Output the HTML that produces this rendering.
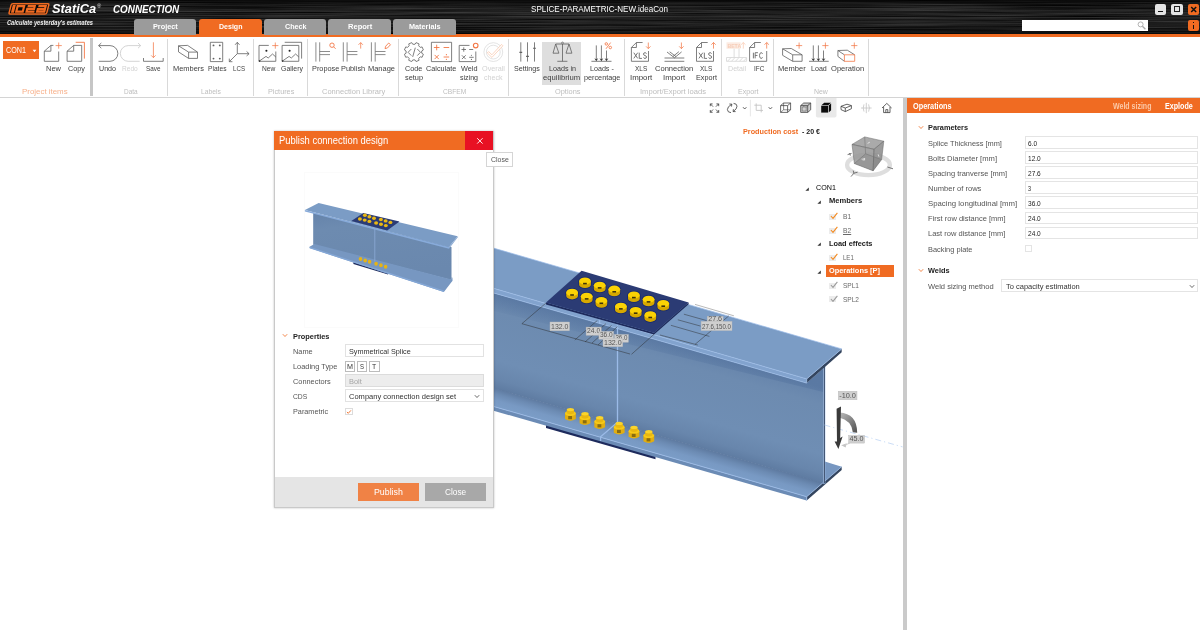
<!DOCTYPE html>
<html><head><meta charset="utf-8"><title>IDEA StatiCa Connection</title>
<style>
html,body{margin:0;padding:0;}
body{width:1200px;height:630px;overflow:hidden;background:#fff;position:relative;font-family:"Liberation Sans",sans-serif;}
#root{position:absolute;left:0;top:0;width:1200px;height:630px;overflow:hidden;will-change:transform;}
.r{position:absolute;display:block;}
.t{position:absolute;display:block;white-space:nowrap;transform-origin:0 50%;font-family:"Liberation Sans",sans-serif;}
#hdr{background:
 repeating-linear-gradient(180deg,rgba(255,255,255,0.00) 0px,rgba(255,255,255,0.035) 0.7px,rgba(255,255,255,0.0) 1.5px,rgba(255,255,255,0.05) 2.3px,rgba(255,255,255,0.01) 3.1px,rgba(255,255,255,0.03) 3.7px,rgba(255,255,255,0.0) 4.3px),
 linear-gradient(180deg,#0c0c0c 0%,#131313 12%,#191919 30%,#1f1f1f 42%,#101010 55%,#0b0b0b 66%,#161616 80%,#101010 92%,#090909 100%);}
</style></head>
<body><div id="root">
<!-- part_header -->
<div class="r" id="hdr" style="left:0;top:0;width:1200px;height:33.8px;"></div>
<svg class="r" style="left:0;top:0" width="1200" height="34" viewBox="0 0 1200 34"><defs><filter id="brush" color-interpolation-filters="sRGB" x="0" y="0" width="100%" height="100%"><feTurbulence type="fractalNoise" baseFrequency="0.006 0.8" numOctaves="3" seed="7" result="n"/><feColorMatrix in="n" type="matrix" values="0.36 0 0 0 -0.05  0.36 0 0 0 -0.05  0.36 0 0 0 -0.05  0 0 0 0 1"/></filter><linearGradient id="hv" x1="0" y1="0" x2="0" y2="1"><stop offset="0" stop-color="#000" stop-opacity="0.75"/><stop offset="0.12" stop-color="#000" stop-opacity="0.25"/><stop offset="0.35" stop-color="#000" stop-opacity="0"/><stop offset="0.7" stop-color="#000" stop-opacity="0.1"/><stop offset="0.9" stop-color="#000" stop-opacity="0.35"/><stop offset="1" stop-color="#000" stop-opacity="0.6"/></linearGradient></defs><rect width="1200" height="34" filter="url(#brush)"/><rect width="1200" height="34" fill="url(#hv)"/></svg>
<div class="r" style="left:0.0px;top:33.6px;width:1200.0px;height:3.7px;background:#f06b22;"></div>
<svg class="r" style="left:7.3px;top:2.9px;" width="43.5" height="12.0" viewBox="-3 0 43.5 12"><g transform="skewX(-14.7)">
      <rect x="1.65" y="0.75" width="37.7" height="10.3" rx="1.3" fill="#0a0a0a" stroke="#f06b22" stroke-width="1.5"/>
      <g fill="none" stroke="#f06b22" stroke-width="2.2">
      <path d="M4.9 2.1 V9.7" stroke-width="3"/>
      <path d="M8.5 3.2 H15 V8.6 H8.5 Z"/>
      <path d="M18.5 3.2 H25.6 V5.9 H18.8 V8.6 H26.7"/>
      <path d="M29.2 3.2 H36.55 V8.6 H29.4 V6.1 H36.55"/>
      </g>
    </g></svg>
<span class="t" style="left:52.0px;top:1.0px;font-size:12.6px;line-height:16.4px;color:#fff;transform:scaleX(1.020);font-weight:bold;font-style:italic;">StatiCa</span>
<span class="t" style="left:97.3px;top:2.8px;font-size:5px;line-height:6.5px;color:#ddd;transform:scaleX(1.140);">®</span>
<span class="t" style="left:112.7px;top:2.6px;font-size:10.6px;line-height:13.8px;color:#fff;transform:scaleX(0.930);font-weight:bold;font-style:italic;">CONNECTION</span>
<span class="t" style="left:7.0px;top:19.4px;font-size:6.8px;line-height:8.8px;color:#f0f0f0;transform:scaleX(0.839);font-weight:bold;font-style:italic;">Calculate yesterday's estimates</span>
<span class="t" style="left:531.0px;top:3.7px;font-size:8.6px;line-height:11.2px;color:#fff;transform:scaleX(0.938);">SPLICE-PARAMETRIC-NEW.ideaCon</span>
<div class="r" style="left:133.5px;top:19.1px;width:62.0px;height:15.5px;background:#9b9b9b;border-radius:3px 3px 0 0;"></div>
<span class="t" style="left:152.6px;top:21.8px;font-size:8.1px;line-height:10.5px;color:#fff;transform:scaleX(0.903);font-weight:bold;">Project</span>
<div class="r" style="left:199.0px;top:19.1px;width:63.0px;height:15.5px;background:#f06b22;border-radius:3px 3px 0 0;"></div>
<span class="t" style="left:219.2px;top:21.8px;font-size:8.1px;line-height:10.5px;color:#fff;transform:scaleX(0.870);font-weight:bold;">Design</span>
<div class="r" style="left:264.0px;top:19.1px;width:62.2px;height:15.5px;background:#9b9b9b;border-radius:3px 3px 0 0;"></div>
<span class="t" style="left:284.8px;top:21.8px;font-size:8.1px;line-height:10.5px;color:#fff;transform:scaleX(0.888);font-weight:bold;">Check</span>
<div class="r" style="left:328.3px;top:19.1px;width:62.7px;height:15.5px;background:#9b9b9b;border-radius:3px 3px 0 0;"></div>
<span class="t" style="left:348.0px;top:21.8px;font-size:8.1px;line-height:10.5px;color:#fff;transform:scaleX(0.931);font-weight:bold;">Report</span>
<div class="r" style="left:393.2px;top:19.1px;width:62.8px;height:15.5px;background:#9b9b9b;border-radius:3px 3px 0 0;"></div>
<span class="t" style="left:409.3px;top:21.8px;font-size:8.1px;line-height:10.5px;color:#fff;transform:scaleX(0.900);font-weight:bold;">Materials</span>
<div class="r" style="left:1021.7px;top:19.5px;width:126.3px;height:11.2px;background:#fff;"></div>
<svg class="r" style="left:1137.0px;top:21.0px;" width="10.0" height="9.0" viewBox="0 0 10.00 9.00"><circle cx="3.6" cy="3.4" r="2.5" fill="none" stroke="#aaa" stroke-width="0.9"/><path d="M5.4 5.2 L8.4 8.2" stroke="#aaa" stroke-width="1.3"/></svg>
<div class="r" style="left:1154.5px;top:3.7px;width:11.2px;height:11.0px;background:#e4e4e4;border-radius:2px;"></div>
<div class="r" style="left:1158.0px;top:10.6px;width:4.6px;height:1.2px;background:#111;"></div>
<div class="r" style="left:1171.0px;top:3.7px;width:11.6px;height:11.0px;background:#e4e4e4;border-radius:2px;"></div>
<div class="r" style="left:1174.0px;top:6.2px;width:5.8px;height:5.8px;border:0.8px solid #222;box-sizing:border-box;border-top-width:1.6px;"></div>
<div class="r" style="left:1188.0px;top:3.7px;width:11.2px;height:11.0px;background:#f06b22;border-radius:2px;"></div>
<svg class="r" style="left:1188.0px;top:3.7px;" width="11.2" height="11.0" viewBox="0 0 11.20 11.00"><path d="M3.2 3 L8.2 8 M8.2 3 L3.2 8" stroke="#111" stroke-width="1.5"/></svg>
<div class="r" style="left:1188.0px;top:19.5px;width:11.2px;height:11.2px;background:#f06b22;border-radius:2px;"></div>
<div class="r" style="left:1193.1px;top:22.2px;width:1.3px;height:1.3px;background:#111;"></div>
<div class="r" style="left:1193.1px;top:24.6px;width:1.3px;height:4.0px;background:#111;"></div>
<!-- part_ribbon -->
<div class="r" style="left:0.0px;top:37.3px;width:1200.0px;height:60.3px;background:#fff;"></div>
<div class="r" style="left:0.0px;top:96.6px;width:1200.0px;height:1.2px;background:#d4d4d4;"></div>
<div class="r" style="left:542.1px;top:41.6px;width:39.1px;height:43.6px;background:#dedede;"></div>
<div class="r" style="left:3.0px;top:41.1px;width:36.2px;height:18.2px;background:#f06b22;"></div>
<span class="t" style="left:6.4px;top:45.1px;font-size:8.3px;line-height:10.8px;color:#fff;transform:scaleX(0.867);">CON1</span>
<svg class="r" style="left:32.0px;top:48.8px;" width="5.0" height="4.0" viewBox="0 0 5.00 4.00"><path d="M0.6 0.8 L4.4 0.8 L2.5 3.2 Z" fill="#fff"/></svg>
<div class="r" style="left:90.4px;top:38.0px;width:2.5px;height:58.4px;background:#c6c6c6;"></div>
<div class="r" style="left:166.5px;top:39.0px;width:1.0px;height:56.5px;background:#d9d9d9;"></div>
<div class="r" style="left:253.0px;top:39.0px;width:1.0px;height:56.5px;background:#d9d9d9;"></div>
<div class="r" style="left:306.8px;top:39.0px;width:1.0px;height:56.5px;background:#d9d9d9;"></div>
<div class="r" style="left:397.9px;top:39.0px;width:1.0px;height:56.5px;background:#d9d9d9;"></div>
<div class="r" style="left:508.1px;top:39.0px;width:1.0px;height:56.5px;background:#d9d9d9;"></div>
<div class="r" style="left:624.1px;top:39.0px;width:1.0px;height:56.5px;background:#d9d9d9;"></div>
<div class="r" style="left:720.6px;top:39.0px;width:1.0px;height:56.5px;background:#d9d9d9;"></div>
<div class="r" style="left:773.1px;top:39.0px;width:1.0px;height:56.5px;background:#d9d9d9;"></div>
<div class="r" style="left:867.7px;top:39.0px;width:1.0px;height:56.5px;background:#d9d9d9;"></div>
<svg class="r" style="left:0;top:0" width="1200" height="100" viewBox="0 0 1200 100"><path d="M50.9 45.4 H53.4 M58.7 51.5 V61.3 H44.3 V51.2 L50.9 45.4 V51.2 H44.3" stroke="#606060" stroke-width="0.8" fill="none" /><path d="M55.6 45.6 H61.800000000000004 M58.7 42.5 V48.7" stroke="#f37746" stroke-width="0.75" fill="none" /><path d="M73.7 45.4 H81.7 V61.3 H67.1 V51.2 L73.7 45.4 V51.2 H67.1" stroke="#606060" stroke-width="0.8" fill="none" /><path d="M75.7 42.3 H84.4 V58.6" stroke="#f37746" stroke-width="0.9" fill="none" /><path d="M98.5 61.3 H110 A7.85 7.85 0 0 0 110 45.6 H98.7 M101.3 43 L98.6 45.6 L101.3 48.2" stroke="#606060" stroke-width="0.8" fill="none" /><path d="M139.7 61.3 H128.2 A7.85 7.85 0 0 1 128.2 45.6 H140.6 M138 43 L140.7 45.6 L138 48.2" stroke="#c9c9c9" stroke-width="0.8" fill="none" /><path d="M153.4 42.3 V57.6 M151.20000000000002 55.4 L153.4 57.6 L155.6 55.4" stroke="#f37746" stroke-width="0.75" fill="none" /><path d="M143.5 58 V61.3 H163.2 V58" stroke="#606060" stroke-width="0.8" fill="none" /><path d="M188.6 52.1 H197.5 V58.4 H188.6 Z M178.5 45.8 L188.6 52.1 M178.5 45.8 L187.6 45.4 L197.5 52.1 M178.5 45.8 V51.9 L188.6 58.4" stroke="#606060" stroke-width="0.8" fill="none" /><path d="M210.3 42.3 H222.7 V61.6 H210.3 Z" stroke="#606060" stroke-width="0.8" fill="none" /><circle cx="213.5" cy="45.4" r="0.95" fill="#606060"/><circle cx="219.8" cy="45.4" r="0.95" fill="#606060"/><circle cx="213.5" cy="58.6" r="0.95" fill="#606060"/><circle cx="219.8" cy="58.6" r="0.95" fill="#606060"/><path d="M237.3 53.7 V42.4 M235.1 44.8 L237.3 42.3 L239.5 44.8 M237.3 53.7 H249 M246.6 51.5 L249.1 53.7 L246.6 55.9 M237.3 53.7 L229.3 61.7 M229.3 58.6 V61.7 H232.4" stroke="#606060" stroke-width="0.8" fill="none" /><path d="M268.8 45.4 H259 V61.3 H275.8 V51.5 M259.4 61 L266 56.4 L268.2 58 L272.5 54 L275.8 57" stroke="#606060" stroke-width="0.8" fill="none" /><circle cx="266.4" cy="50.7" r="1.05" fill="#222"/><circle cx="259.5" cy="61" r="0.8" fill="#222"/><path d="M272.2 45.6 H278.40000000000003 M275.3 42.5 V48.7" stroke="#f37746" stroke-width="0.75" fill="none" /><path d="M282.1 45.4 H298.8 V61.3 H282.1 Z M282.5 61 L289.1 56.4 L291.3 58 L295.6 54 L298.8 57 M284.7 42.3 H301.6 V58.6" stroke="#606060" stroke-width="0.8" fill="none" /><circle cx="289.6" cy="50.7" r="1.05" fill="#222"/><circle cx="282.6" cy="61" r="0.8" fill="#222"/><path d="M315.9 42.3 V61.6 M319.7 42.3 V61.6 M319.7 51.5 H330.0 M319.7 54.6 H330.0" stroke="#707070" stroke-width="0.8" fill="none" /><path d="M343.3 42.3 V61.6 M347.1 42.3 V61.6 M347.1 51.5 H357.40000000000003 M347.1 54.6 H357.40000000000003" stroke="#707070" stroke-width="0.8" fill="none" /><path d="M371.4 42.3 V61.6 M375.2 42.3 V61.6 M375.2 51.5 H385.5 M375.2 54.6 H385.5" stroke="#707070" stroke-width="0.8" fill="none" /><circle cx="332" cy="45.2" r="2.2" fill="none" stroke="#f37746" stroke-width="0.9"/><path d="M333.6 46.8 L335.6 48.8" stroke="#f37746" stroke-width="0.9" fill="none" /><path d="M360.7 48.6 V42.6 M358.5 44.800000000000004 L360.7 42.6 L362.9 44.800000000000004" stroke="#f37746" stroke-width="0.75" fill="none" /><path d="M385 48.6 L385.7 46.2 L388.7 43 L390.5 44.7 L387.4 48 Z" stroke="#f37746" stroke-width="0.85" fill="none" /><path d="M415.02 44.28 L416.04 42.64 L419.07 43.90 L418.63 45.78 L420.22 47.37 L422.10 46.93 L423.36 49.96 L421.72 50.98 L421.72 53.22 L423.36 54.24 L422.10 57.27 L420.22 56.83 L418.63 58.42 L419.07 60.30 L416.04 61.56 L415.02 59.92 L412.78 59.92 L411.76 61.56 L408.73 60.30 L409.17 58.42 L407.58 56.83 L405.70 57.27 L404.44 54.24 L406.08 53.22 L406.08 50.98 L404.44 49.96 L405.70 46.93 L407.58 47.37 L409.17 45.78 L408.73 43.90 L411.76 42.64 L412.78 44.28 Z" stroke="#606060" stroke-width="0.8" fill="none" stroke-linejoin="round"/><path d="M411.3 49 L408.1 52.3 L411.3 55.6 M417.3 49 L420.5 52.3 L417.3 55.6 M415.3 47.7 L412.7 56.9" stroke="#606060" stroke-width="0.8" fill="none" /><path d="M431.4 42.3 H451.6 V61.6 H431.4 Z" stroke="#606060" stroke-width="0.8" fill="none" /><path d="M433.9 47.5 H439.5 M436.7 44.7 V50.3 M443.6 47.5 H449.2 M434.6 54.9 L438.8 59.1 M438.8 54.9 L434.6 59.1 M443.6 57 H449.2" stroke="#f37746" stroke-width="0.9" fill="none" /><circle cx="446.4" cy="54.7" r="0.6" fill="#f37746"/><circle cx="446.4" cy="59.3" r="0.6" fill="#f37746"/><path d="M469.5 45.4 H459.2 V61.6 H475.8 V51.5" stroke="#606060" stroke-width="0.8" fill="none" /><path d="M461.5 49.5 H466 M463.75 47.3 V51.7 M469.2 49.5 H473.2 M461.9 55.3 L465.7 59.1 M465.7 55.3 L461.9 59.1 M469.2 57.3 H473.7" stroke="#606060" stroke-width="0.8" fill="none" /><circle cx="471.4" cy="55.2" r="0.55" fill="#606060"/><circle cx="471.4" cy="59.4" r="0.55" fill="#606060"/><circle cx="475.7" cy="45.6" r="2.3" fill="none" stroke="#f37746" stroke-width="1.1"/><circle cx="493.3" cy="52.1" r="9.4" fill="none" stroke="#dcdcdc" stroke-width="0.8"/><circle cx="493.3" cy="52.1" r="6.9" fill="none" stroke="#dcdcdc" stroke-width="0.8"/><path d="M488.6 51.6 L491.9 54.8 L501.6 44.4 L502.9 45.8 L491.9 57.4 L487.3 52.9 Z" stroke="#f9c4a8" stroke-width="0.7" fill="#fff" /><path d="M520.8 42.3 V61.6 M527.5 42.3 V61.6 M534.5 42.3 V61.6" stroke="#606060" stroke-width="0.8" fill="none" /><path d="M519.4 52.4 H522.2 M526.1 56.4 H528.9 M533.1 48.3 H535.9" stroke="#606060" stroke-width="1.1" fill="none" /><path d="M562.5 44 V61.3 M557.3 61.3 H567.4 M555.7 44 H569 M555.7 44 L553 53.2 H558.9 Z M569 44 L566 53.2 H571.9 Z" stroke="#606060" stroke-width="0.8" fill="none" /><circle cx="562.5" cy="43" r="0.95" fill="#dedede" stroke="#606060" stroke-width="0.7"/><path d="M596.3 45.4 V60" stroke="#606060" stroke-width="0.8" fill="none" /><path d="M594.4 58.2 L596.3 61.2 L598.1999999999999 58.2 L596.3 59.2 Z" fill="#333"/><path d="M601.4 45.4 V60" stroke="#606060" stroke-width="0.8" fill="none" /><path d="M599.5 58.2 L601.4 61.2 L603.3 58.2 L601.4 59.2 Z" fill="#333"/><path d="M606.5 50.5 V60" stroke="#606060" stroke-width="0.8" fill="none" /><path d="M604.6 58.2 L606.5 61.2 L608.4 58.2 L606.5 59.2 Z" fill="#333"/><path d="M591.4 61.3 H611.5" stroke="#606060" stroke-width="0.8" fill="none" /><circle cx="606.3" cy="43.9" r="1.25" fill="none" stroke="#f37746" stroke-width="0.85"/><circle cx="610.3" cy="47.5" r="1.25" fill="none" stroke="#f37746" stroke-width="0.85"/><path d="M610.6 42.6 L606 48.8" stroke="#f37746" stroke-width="0.85" fill="none" /><path d="M636.4 42.5 H642.6 M648.5 51 V61.3 H631.4 V47.5 L636.4 42.5 V47.5 H631.4" stroke="#606060" stroke-width="0.8" fill="none" /><path d="M633.80 52.7 L637.70 58.4 M637.70 52.7 L633.80 58.4 M639.25 52.7 V58.4 H641.95 M646.50 53.60 Q646.10 52.7 645.00 52.7 Q643.50 52.7 643.50 54.12 Q643.50 55.27 645.00 55.55 Q646.50 55.89 646.50 57.03 Q646.50 58.4 645.00 58.4 Q643.80 58.4 643.50 57.50" stroke="#606060" stroke-width="0.85" fill="none" /><path d="M648.3 42.5 V48.6 M646.0999999999999 46.4 L648.3 48.6 L650.5 46.4" stroke="#f37746" stroke-width="0.75" fill="none" /><path d="M664.5 58 H684.3 M664.5 61.3 H684.3 M667 52 L674.5 57.8 L681.6 51.9 M669.7 51.8 L676 56.6 M672.9 56.5 L678.9 51.7" stroke="#606060" stroke-width="0.8" fill="none" /><path d="M681.4 42.5 V48.6 M679.1999999999999 46.4 L681.4 48.6 L683.6 46.4" stroke="#f37746" stroke-width="0.75" fill="none" /><path d="M701.5 42.5 H707.7 M713.5 51 V61.3 H696.5 V47.5 L701.5 42.5 V47.5 H696.5" stroke="#606060" stroke-width="0.8" fill="none" /><path d="M698.90 52.7 L702.80 58.4 M702.80 52.7 L698.90 58.4 M704.35 52.7 V58.4 H707.05 M711.60 53.60 Q711.20 52.7 710.10 52.7 Q708.60 52.7 708.60 54.12 Q708.60 55.27 710.10 55.55 Q711.60 55.89 711.60 57.03 Q711.60 58.4 710.10 58.4 Q708.90 58.4 708.60 57.50" stroke="#606060" stroke-width="0.85" fill="none" /><path d="M713.5 48.6 V42.5 M711.3 44.7 L713.5 42.5 L715.7 44.7" stroke="#f37746" stroke-width="0.75" fill="none" /><rect x="726.5" y="42.3" width="14.1" height="6.5" fill="#fcebe2"/><text x="727.4" y="47.7" font-family="Liberation Sans" font-size="5.2" font-weight="bold" fill="#f6cdb8">BETA</text><path d="M743.3 48.6 V42.5 M741.0999999999999 44.7 L743.3 42.5 L745.5 44.7" stroke="#f9c9b0" stroke-width="0.75" fill="none" /><path d="M734.1 48.8 V57.5 M739 48.8 V57.5 M726.5 57.5 H746.6 V61.3 H726.5 Z M727.5 61.3 L731 57.5 M731.5 61.3 L735 57.5 M735.5 61.3 L739 57.5 M739.5 61.3 L743 57.5 M743.5 61.3 L746.5 58" stroke="#d6d6d6" stroke-width="0.8" fill="none" /><path d="M754.6 42.5 H760.8000000000001 M766.7 51 V61.3 H749.6 V47.5 L754.6 42.5 V47.5 H749.6" stroke="#606060" stroke-width="0.8" fill="none" /><path d="M753.40 52.7 V58.4 M757.95 52.7 H755.15 V58.4 M755.15 55.44 H757.45 M762.50 53.80 Q762.20 52.7 761.20 52.7 Q759.50 52.7 759.50 55.55 Q759.50 58.4 761.20 58.4 Q762.20 58.4 762.50 57.30" stroke="#606060" stroke-width="0.85" fill="none" /><path d="M766.7 48.6 V42.5 M764.5 44.7 L766.7 42.5 L768.9000000000001 44.7" stroke="#f37746" stroke-width="0.75" fill="none" /><path d="M792.7 54.8 H802.1 V61.3 H792.7 Z M782.6 48.8 L792.7 54.8 M782.6 48.8 L791.3 48.5 L802.1 54.8 M782.6 48.8 V55.3 L792.7 61.3" stroke="#606060" stroke-width="0.8" fill="none" /><path d="M796.0 45.6 H802.2 M799.1 42.5 V48.7" stroke="#f37746" stroke-width="0.75" fill="none" /><path d="M813.3 45.4 V60" stroke="#606060" stroke-width="0.8" fill="none" /><path d="M811.4 58.2 L813.3 61.2 L815.1999999999999 58.2 L813.3 59.2 Z" fill="#333"/><path d="M818.4 45.4 V60" stroke="#606060" stroke-width="0.8" fill="none" /><path d="M816.5 58.2 L818.4 61.2 L820.3 58.2 L818.4 59.2 Z" fill="#333"/><path d="M823.5 50.5 V60" stroke="#606060" stroke-width="0.8" fill="none" /><path d="M821.6 58.2 L823.5 61.2 L825.4 58.2 L823.5 59.2 Z" fill="#333"/><path d="M809 61.3 H828.7" stroke="#606060" stroke-width="0.8" fill="none" /><path d="M822.3 45.6 H828.5 M825.4 42.5 V48.7" stroke="#f37746" stroke-width="0.75" fill="none" /><path d="M837.9 50.5 L844.4 54.8 M837.9 50.5 L847.3 50.2 L854.7 54.8 M837.9 50.5 V56.4 L844.4 61.3" stroke="#606060" stroke-width="0.8" fill="none" /><path d="M844.4 54.8 H854.7 V61.3 H844.4 Z" stroke="#f37746" stroke-width="0.8" fill="none" /><path d="M851.1999999999999 45.6 H857.4 M854.3 42.5 V48.7" stroke="#f37746" stroke-width="0.75" fill="none" /></svg>
<span class="t" style="left:46.0px;top:63.5px;font-size:7.6px;line-height:9.9px;color:#3d3d3d;transform:scaleX(0.987);">New</span>
<span class="t" style="left:67.5px;top:63.5px;font-size:7.6px;line-height:9.9px;color:#3d3d3d;transform:scaleX(0.958);">Copy</span>
<span class="t" style="left:99.0px;top:63.5px;font-size:7.6px;line-height:9.9px;color:#3d3d3d;transform:scaleX(0.936);">Undo</span>
<span class="t" style="left:146.0px;top:63.5px;font-size:7.6px;line-height:9.9px;color:#3d3d3d;transform:scaleX(0.837);">Save</span>
<span class="t" style="left:173.0px;top:63.5px;font-size:7.6px;line-height:9.9px;color:#3d3d3d;transform:scaleX(0.979);">Members</span>
<span class="t" style="left:207.5px;top:63.5px;font-size:7.6px;line-height:9.9px;color:#3d3d3d;transform:scaleX(0.876);">Plates</span>
<span class="t" style="left:233.0px;top:63.5px;font-size:7.6px;line-height:9.9px;color:#3d3d3d;transform:scaleX(0.812);">LCS</span>
<span class="t" style="left:262.0px;top:63.5px;font-size:7.6px;line-height:9.9px;color:#3d3d3d;transform:scaleX(0.875);">New</span>
<span class="t" style="left:281.0px;top:63.5px;font-size:7.6px;line-height:9.9px;color:#3d3d3d;transform:scaleX(0.914);">Gallery</span>
<span class="t" style="left:312.0px;top:63.5px;font-size:7.6px;line-height:9.9px;color:#3d3d3d;transform:scaleX(0.964);">Propose</span>
<span class="t" style="left:341.3px;top:63.5px;font-size:7.6px;line-height:9.9px;color:#3d3d3d;transform:scaleX(0.971);">Publish</span>
<span class="t" style="left:367.5px;top:63.5px;font-size:7.6px;line-height:9.9px;color:#3d3d3d;transform:scaleX(0.983);">Manage</span>
<span class="t" style="left:405.3px;top:63.5px;font-size:7.6px;line-height:9.9px;color:#3d3d3d;transform:scaleX(0.947);">Code</span>
<span class="t" style="left:405.0px;top:73.0px;font-size:7.6px;line-height:9.9px;color:#3d3d3d;transform:scaleX(0.968);">setup</span>
<span class="t" style="left:426.0px;top:63.5px;font-size:7.6px;line-height:9.9px;color:#3d3d3d;transform:scaleX(0.956);">Calculate</span>
<span class="t" style="left:460.5px;top:63.5px;font-size:7.6px;line-height:9.9px;color:#3d3d3d;transform:scaleX(0.961);">Weld</span>
<span class="t" style="left:460.0px;top:73.0px;font-size:7.6px;line-height:9.9px;color:#3d3d3d;transform:scaleX(0.926);">sizing</span>
<span class="t" style="left:513.9px;top:63.5px;font-size:7.6px;line-height:9.9px;color:#3d3d3d;transform:scaleX(0.940);">Settings</span>
<span class="t" style="left:548.6px;top:63.5px;font-size:7.6px;line-height:9.9px;color:#3d3d3d;transform:scaleX(0.943);">Loads in</span>
<span class="t" style="left:542.9px;top:73.0px;font-size:7.6px;line-height:9.9px;color:#3d3d3d;transform:scaleX(1.010);">equilibrium</span>
<span class="t" style="left:589.8px;top:63.5px;font-size:7.6px;line-height:9.9px;color:#3d3d3d;transform:scaleX(0.939);">Loads -</span>
<span class="t" style="left:583.8px;top:73.0px;font-size:7.6px;line-height:9.9px;color:#3d3d3d;transform:scaleX(0.955);">percentage</span>
<span class="t" style="left:634.8px;top:63.5px;font-size:7.6px;line-height:9.9px;color:#3d3d3d;transform:scaleX(0.849);">XLS</span>
<span class="t" style="left:630.0px;top:73.0px;font-size:7.6px;line-height:9.9px;color:#3d3d3d;transform:scaleX(1.035);">Import</span>
<span class="t" style="left:654.7px;top:63.5px;font-size:7.6px;line-height:9.9px;color:#3d3d3d;transform:scaleX(0.996);">Connection</span>
<span class="t" style="left:663.0px;top:73.0px;font-size:7.6px;line-height:9.9px;color:#3d3d3d;transform:scaleX(1.035);">Import</span>
<span class="t" style="left:700.0px;top:63.5px;font-size:7.6px;line-height:9.9px;color:#3d3d3d;transform:scaleX(0.849);">XLS</span>
<span class="t" style="left:695.8px;top:73.0px;font-size:7.6px;line-height:9.9px;color:#3d3d3d;transform:scaleX(0.956);">Export</span>
<span class="t" style="left:753.5px;top:63.5px;font-size:7.6px;line-height:9.9px;color:#3d3d3d;transform:scaleX(0.841);">IFC</span>
<span class="t" style="left:778.3px;top:63.5px;font-size:7.6px;line-height:9.9px;color:#3d3d3d;transform:scaleX(0.994);">Member</span>
<span class="t" style="left:811.0px;top:63.5px;font-size:7.6px;line-height:9.9px;color:#3d3d3d;transform:scaleX(0.935);">Load</span>
<span class="t" style="left:830.8px;top:63.5px;font-size:7.6px;line-height:9.9px;color:#3d3d3d;transform:scaleX(0.995);">Operation</span>
<span class="t" style="left:122.3px;top:63.5px;font-size:7.6px;line-height:9.9px;color:#d2d2d2;transform:scaleX(0.864);">Redo</span>
<span class="t" style="left:482.0px;top:63.5px;font-size:7.6px;line-height:9.9px;color:#d2d2d2;transform:scaleX(0.955);">Overall</span>
<span class="t" style="left:483.8px;top:73.0px;font-size:7.6px;line-height:9.9px;color:#d2d2d2;transform:scaleX(0.932);">check</span>
<span class="t" style="left:727.5px;top:63.5px;font-size:7.6px;line-height:9.9px;color:#d2d2d2;transform:scaleX(0.937);">Detail</span>
<span class="t" style="left:22.0px;top:87.2px;font-size:7.6px;line-height:9.9px;color:#f7b08a;transform:scaleX(1.040);">Project items</span>
<span class="t" style="left:124.0px;top:87.2px;font-size:7.6px;line-height:9.9px;color:#bdbdbd;transform:scaleX(0.853);">Data</span>
<span class="t" style="left:201.0px;top:87.2px;font-size:7.6px;line-height:9.9px;color:#bdbdbd;transform:scaleX(0.893);">Labels</span>
<span class="t" style="left:267.7px;top:87.2px;font-size:7.6px;line-height:9.9px;color:#bdbdbd;transform:scaleX(0.958);">Pictures</span>
<span class="t" style="left:321.8px;top:87.2px;font-size:7.6px;line-height:9.9px;color:#bdbdbd;transform:scaleX(0.991);">Connection Library</span>
<span class="t" style="left:443.0px;top:87.2px;font-size:7.6px;line-height:9.9px;color:#bdbdbd;transform:scaleX(0.876);">CBFEM</span>
<span class="t" style="left:555.1px;top:87.2px;font-size:7.6px;line-height:9.9px;color:#bdbdbd;transform:scaleX(0.974);">Options</span>
<span class="t" style="left:640.0px;top:87.2px;font-size:7.6px;line-height:9.9px;color:#bdbdbd;transform:scaleX(1.002);">Import/Export loads</span>
<span class="t" style="left:737.7px;top:87.2px;font-size:7.6px;line-height:9.9px;color:#bdbdbd;transform:scaleX(0.933);">Export</span>
<span class="t" style="left:814.3px;top:87.2px;font-size:7.6px;line-height:9.9px;color:#bdbdbd;transform:scaleX(0.914);">New</span>
<!-- part_scene -->
<svg class="r" style="left:0;top:98px" width="904" height="532" viewBox="0 98 904 532"><defs><linearGradient id="webg" gradientUnits="userSpaceOnUse" x1="600" y1="323.6" x2="574.7" y2="411.2"><stop offset="0" stop-color="#6684ab"/><stop offset="0.18" stop-color="#6d8bb0"/><stop offset="0.7" stop-color="#6f8eb4"/><stop offset="0.9" stop-color="#6886ac"/><stop offset="1" stop-color="#5f7ca2"/></linearGradient><linearGradient id="botg" gradientUnits="userSpaceOnUse" x1="600" y1="418.5" x2="595" y2="435.7"><stop offset="0" stop-color="#5e7aa0"/><stop offset="0.3" stop-color="#6c8bb3"/><stop offset="0.65" stop-color="#7899c3"/><stop offset="1" stop-color="#7b9dc7"/></linearGradient></defs><polygon points="546.0,424.5 655.5,456.0 655.5,459.3 546.0,428.0" fill="#1d2a5c"/><polygon points="824.0,461.3 841.7,466.7 824.0,482.3" fill="#7797c1"/><polygon points="400.0,266.0 806.7,383.1 823.1,368.6 823.1,483.4 400.0,361.5" fill="url(#webg)"/><defs><linearGradient id="shg" gradientUnits="userSpaceOnUse" x1="600" y1="323.6" x2="594.2" y2="343.8"><stop offset="0" stop-color="#4a6a98" stop-opacity="0.42"/><stop offset="1" stop-color="#4a6a98" stop-opacity="0"/></linearGradient></defs><polygon points="400.0,266.0 806.7,383.1 823.1,368.6 823.1,392.0 400.0,288.0" fill="url(#shg)"/><polygon points="400.0,360.9 823.1,482.8 806.7,496.7 400.0,379.5" fill="url(#botg)"/><polygon points="400.0,379.5 806.7,496.7 806.7,500.6 400.0,383.8" fill="#6b8bb5"/><path d="M400.0 379.5 L806.7 496.7" stroke="#9cbbe6" stroke-width="0.9"/><polygon points="806.7,496.7 841.7,466.7 841.7,470.0 806.7,500.6" fill="#34455f"/><path d="M806.7 496.7 L841.7 466.7" stroke="#9cbbe6" stroke-width="0.8"/><path d="M806.7 496.5 V500.6" stroke="#9cbbe6" stroke-width="0.9"/><rect x="823.1" y="366.5" width="2.2" height="117.3" fill="#9fc0ea"/><rect x="823.8" y="367" width="0.9" height="116.3" fill="#1f2c44"/><polygon points="400.0,221.0 841.7,348.9 806.7,378.9 400.0,261.3" fill="#7b9cc5"/><path d="M400.0 221.0 L841.7 348.9" stroke="#9dbdea" stroke-width="0.7"/><polygon points="400.0,261.3 806.7,378.9 806.7,383.1 400.0,266.0" fill="#82a3ce"/><path d="M400.0 261.3 L806.7 378.9 M400.0 266.0 L806.7 383.1" stroke="#9cbbe6" stroke-width="0.8"/><polygon points="806.7,378.9 841.7,348.9 841.7,352.2 806.7,383.1" fill="#34455f"/><path d="M806.7 378.9 L841.7 348.9 M806.7 378.7 V383.2" stroke="#9cbbe6" stroke-width="0.8"/><path d="M599.6 318.4 V323.8 M617.5 324 V422.3 L600.6 436.8 V441" stroke="#9bbbe8" stroke-width="1.3" fill="none"/><polygon points="546.0,302.5 654.0,332.7 654.0,334.6 546.0,304.6" fill="#1d2a5c"/><polygon points="581.6,270.8 688.6,302.5 654.0,332.7 546.0,302.5" fill="#2b3b74"/><polygon points="688.6,302.5 688.6,304.2 654.0,334.6 654.0,332.7" fill="#1d2a5c"/><path d="M579.1 281.0 V284.4 A5.9 3.6 0 0 0 590.9 284.4 V281.0 A5.9 3.6 0 0 0 579.1 281.0 Z" fill="#0f236c" stroke="#0f236c" stroke-width="1.5" stroke-linejoin="round" opacity="0.8"/><path d="M579.1 281.0 V284.4 A5.9 3.6 0 0 0 590.9 284.4 V281.0 Z" fill="#d6a800"/><ellipse cx="585.0" cy="281.0" rx="5.9" ry="3.6" fill="#fbd204"/><rect x="583.1" y="282.8" width="3.7" height="1.6" fill="#3d3208"/><path d="M593.8 285.3 V288.7 A5.9 3.6 0 0 0 605.6 288.7 V285.3 A5.9 3.6 0 0 0 593.8 285.3 Z" fill="#0f236c" stroke="#0f236c" stroke-width="1.5" stroke-linejoin="round" opacity="0.8"/><path d="M593.8 285.3 V288.7 A5.9 3.6 0 0 0 605.6 288.7 V285.3 Z" fill="#d6a800"/><ellipse cx="599.7" cy="285.3" rx="5.9" ry="3.6" fill="#fbd204"/><rect x="597.8" y="287.1" width="3.7" height="1.6" fill="#3d3208"/><path d="M608.4 289.2 V292.6 A5.9 3.6 0 0 0 620.2 292.6 V289.2 A5.9 3.6 0 0 0 608.4 289.2 Z" fill="#0f236c" stroke="#0f236c" stroke-width="1.5" stroke-linejoin="round" opacity="0.8"/><path d="M608.4 289.2 V292.6 A5.9 3.6 0 0 0 620.2 292.6 V289.2 Z" fill="#d6a800"/><ellipse cx="614.3" cy="289.2" rx="5.9" ry="3.6" fill="#fbd204"/><rect x="612.4" y="291.0" width="3.7" height="1.6" fill="#3d3208"/><path d="M628.0 295.0 V298.4 A5.9 3.6 0 0 0 639.8 298.4 V295.0 A5.9 3.6 0 0 0 628.0 295.0 Z" fill="#0f236c" stroke="#0f236c" stroke-width="1.5" stroke-linejoin="round" opacity="0.8"/><path d="M628.0 295.0 V298.4 A5.9 3.6 0 0 0 639.8 298.4 V295.0 Z" fill="#d6a800"/><ellipse cx="633.9" cy="295.0" rx="5.9" ry="3.6" fill="#fbd204"/><rect x="632.0" y="296.8" width="3.7" height="1.6" fill="#3d3208"/><path d="M642.7 299.3 V302.7 A5.9 3.6 0 0 0 654.5 302.7 V299.3 A5.9 3.6 0 0 0 642.7 299.3 Z" fill="#0f236c" stroke="#0f236c" stroke-width="1.5" stroke-linejoin="round" opacity="0.8"/><path d="M642.7 299.3 V302.7 A5.9 3.6 0 0 0 654.5 302.7 V299.3 Z" fill="#d6a800"/><ellipse cx="648.6" cy="299.3" rx="5.9" ry="3.6" fill="#fbd204"/><rect x="646.7" y="301.1" width="3.7" height="1.6" fill="#3d3208"/><path d="M657.4 303.6 V307.0 A5.9 3.6 0 0 0 669.2 307.0 V303.6 A5.9 3.6 0 0 0 657.4 303.6 Z" fill="#0f236c" stroke="#0f236c" stroke-width="1.5" stroke-linejoin="round" opacity="0.8"/><path d="M657.4 303.6 V307.0 A5.9 3.6 0 0 0 669.2 307.0 V303.6 Z" fill="#d6a800"/><ellipse cx="663.3" cy="303.6" rx="5.9" ry="3.6" fill="#fbd204"/><rect x="661.4" y="305.4" width="3.7" height="1.6" fill="#3d3208"/><path d="M566.2 292.4 V295.8 A5.9 3.6 0 0 0 578.0 295.8 V292.4 A5.9 3.6 0 0 0 566.2 292.4 Z" fill="#0f236c" stroke="#0f236c" stroke-width="1.5" stroke-linejoin="round" opacity="0.8"/><path d="M566.2 292.4 V295.8 A5.9 3.6 0 0 0 578.0 295.8 V292.4 Z" fill="#d6a800"/><ellipse cx="572.1" cy="292.4" rx="5.9" ry="3.6" fill="#fbd204"/><rect x="570.2" y="294.2" width="3.7" height="1.6" fill="#3d3208"/><path d="M580.8 296.3 V299.7 A5.9 3.6 0 0 0 592.6 299.7 V296.3 A5.9 3.6 0 0 0 580.8 296.3 Z" fill="#0f236c" stroke="#0f236c" stroke-width="1.5" stroke-linejoin="round" opacity="0.8"/><path d="M580.8 296.3 V299.7 A5.9 3.6 0 0 0 592.6 299.7 V296.3 Z" fill="#d6a800"/><ellipse cx="586.7" cy="296.3" rx="5.9" ry="3.6" fill="#fbd204"/><rect x="584.8" y="298.1" width="3.7" height="1.6" fill="#3d3208"/><path d="M595.5 300.7 V304.1 A5.9 3.6 0 0 0 607.3 304.1 V300.7 A5.9 3.6 0 0 0 595.5 300.7 Z" fill="#0f236c" stroke="#0f236c" stroke-width="1.5" stroke-linejoin="round" opacity="0.8"/><path d="M595.5 300.7 V304.1 A5.9 3.6 0 0 0 607.3 304.1 V300.7 Z" fill="#d6a800"/><ellipse cx="601.4" cy="300.7" rx="5.9" ry="3.6" fill="#fbd204"/><rect x="599.5" y="302.5" width="3.7" height="1.6" fill="#3d3208"/><path d="M615.0 306.3 V309.7 A5.9 3.6 0 0 0 626.8 309.7 V306.3 A5.9 3.6 0 0 0 615.0 306.3 Z" fill="#0f236c" stroke="#0f236c" stroke-width="1.5" stroke-linejoin="round" opacity="0.8"/><path d="M615.0 306.3 V309.7 A5.9 3.6 0 0 0 626.8 309.7 V306.3 Z" fill="#d6a800"/><ellipse cx="620.9" cy="306.3" rx="5.9" ry="3.6" fill="#fbd204"/><rect x="619.0" y="308.1" width="3.7" height="1.6" fill="#3d3208"/><path d="M629.8 310.6 V314.0 A5.9 3.6 0 0 0 641.6 314.0 V310.6 A5.9 3.6 0 0 0 629.8 310.6 Z" fill="#0f236c" stroke="#0f236c" stroke-width="1.5" stroke-linejoin="round" opacity="0.8"/><path d="M629.8 310.6 V314.0 A5.9 3.6 0 0 0 641.6 314.0 V310.6 Z" fill="#d6a800"/><ellipse cx="635.7" cy="310.6" rx="5.9" ry="3.6" fill="#fbd204"/><rect x="633.8" y="312.4" width="3.7" height="1.6" fill="#3d3208"/><path d="M644.4 314.9 V318.3 A5.9 3.6 0 0 0 656.2 318.3 V314.9 A5.9 3.6 0 0 0 644.4 314.9 Z" fill="#0f236c" stroke="#0f236c" stroke-width="1.5" stroke-linejoin="round" opacity="0.8"/><path d="M644.4 314.9 V318.3 A5.9 3.6 0 0 0 656.2 318.3 V314.9 Z" fill="#d6a800"/><ellipse cx="650.3" cy="314.9" rx="5.9" ry="3.6" fill="#fbd204"/><rect x="648.4" y="316.7" width="3.7" height="1.6" fill="#3d3208"/><path d="M565.0 413.6 V419.0 Q570.4 422.4 575.8 419.0 V413.6 Q570.4 410.6 565.0 413.6 Z" fill="#e2ae10"/><ellipse cx="570.4" cy="413.4" rx="5.4" ry="2.6" fill="#f7ca18"/><path d="M566.8 409.6 V413.2 Q570.4 415.4 574.0 413.2 V409.6 Z" fill="#e9b712"/><ellipse cx="570.4" cy="409.6" rx="3.6" ry="1.7" fill="#fbd42a"/><rect x="568.2" y="416.0" width="3.8" height="3.2" fill="#6b5510" opacity="0.75"/><path d="M579.6 417.8 V423.2 Q585.0 426.6 590.4 423.2 V417.8 Q585.0 414.8 579.6 417.8 Z" fill="#e2ae10"/><ellipse cx="585.0" cy="417.6" rx="5.4" ry="2.6" fill="#f7ca18"/><path d="M581.4 413.8 V417.4 Q585.0 419.6 588.6 417.4 V413.8 Z" fill="#e9b712"/><ellipse cx="585.0" cy="413.8" rx="3.6" ry="1.7" fill="#fbd42a"/><rect x="582.8" y="420.2" width="3.8" height="3.2" fill="#6b5510" opacity="0.75"/><path d="M594.3 421.8 V427.2 Q599.7 430.6 605.1 427.2 V421.8 Q599.7 418.8 594.3 421.8 Z" fill="#e2ae10"/><ellipse cx="599.7" cy="421.6" rx="5.4" ry="2.6" fill="#f7ca18"/><path d="M596.1 417.8 V421.4 Q599.7 423.6 603.3 421.4 V417.8 Z" fill="#e9b712"/><ellipse cx="599.7" cy="417.8" rx="3.6" ry="1.7" fill="#fbd42a"/><rect x="597.5" y="424.2" width="3.8" height="3.2" fill="#6b5510" opacity="0.75"/><path d="M613.8 427.4 V432.8 Q619.2 436.2 624.6 432.8 V427.4 Q619.2 424.4 613.8 427.4 Z" fill="#e2ae10"/><ellipse cx="619.2" cy="427.2" rx="5.4" ry="2.6" fill="#f7ca18"/><path d="M615.6 423.4 V427.0 Q619.2 429.2 622.8 427.0 V423.4 Z" fill="#e9b712"/><ellipse cx="619.2" cy="423.4" rx="3.6" ry="1.7" fill="#fbd42a"/><rect x="617.0" y="429.8" width="3.8" height="3.2" fill="#6b5510" opacity="0.75"/><path d="M628.6 431.4 V436.8 Q634.0 440.2 639.4 436.8 V431.4 Q634.0 428.4 628.6 431.4 Z" fill="#e2ae10"/><ellipse cx="634.0" cy="431.2" rx="5.4" ry="2.6" fill="#f7ca18"/><path d="M630.4 427.4 V431.0 Q634.0 433.2 637.6 431.0 V427.4 Z" fill="#e9b712"/><ellipse cx="634.0" cy="427.4" rx="3.6" ry="1.7" fill="#fbd42a"/><rect x="631.8" y="433.8" width="3.8" height="3.2" fill="#6b5510" opacity="0.75"/><path d="M643.4 435.8 V441.2 Q648.8 444.6 654.2 441.2 V435.8 Q648.8 432.8 643.4 435.8 Z" fill="#e2ae10"/><ellipse cx="648.8" cy="435.6" rx="5.4" ry="2.6" fill="#f7ca18"/><path d="M645.2 431.8 V435.4 Q648.8 437.6 652.4 435.4 V431.8 Z" fill="#e9b712"/><ellipse cx="648.8" cy="431.8" rx="3.6" ry="1.7" fill="#fbd42a"/><rect x="646.6" y="438.2" width="3.8" height="3.2" fill="#6b5510" opacity="0.75"/><path d="M546 303 L521.9 323.7 L630 354 M597.3 320.5 L574.8 340 M605.9 323.7 L585 342 M611.5 325.5 L592 343 M617.5 326.5 L598 345 M654.3 334 L631.5 354.3 M683.9 314.2 L706.7 320.6 M677.8 319.8 L700.6 326.1 M670.9 325.3 L709.4 336.4 M660 335 L697.8 345 M728.9 315.8 L695 344.4" stroke="#2a2a2a" stroke-width="0.55" fill="none" opacity="0.85"/><path d="M695 304.4 L733.9 315.8" stroke="#8a8a8a" stroke-width="0.6" fill="none"/><rect x="550" y="322" width="19.5" height="8.8" fill="#cfcfcf" stroke="#b8b8b8" stroke-width="0.4"/><text transform="translate(551 328.90000000000003) scale(0.971 1)" font-family="Liberation Sans" font-size="7.2" fill="#555">132.0</text><rect x="586.1" y="327.1" width="15.1" height="8.2" fill="#cfcfcf" stroke="#b8b8b8" stroke-width="0.4"/><text transform="translate(587.1 333.40000000000003) scale(0.935 1)" font-family="Liberation Sans" font-size="7.2" fill="#555">24.0</text><rect x="598.9" y="331.4" width="14.7" height="7.8" fill="#cfcfcf" stroke="#b8b8b8" stroke-width="0.4"/><text transform="translate(599.9 337.3) scale(0.906 1)" font-family="Liberation Sans" font-size="7.2" fill="#555">36.0</text><rect x="614.4" y="334.5" width="14.0" height="7.8" fill="#cfcfcf" stroke="#b8b8b8" stroke-width="0.4"/><text transform="translate(615.4 340.40000000000003) scale(0.856 1)" font-family="Liberation Sans" font-size="7.2" fill="#555">36.0</text><rect x="603" y="338.4" width="19.7" height="8.3" fill="#cfcfcf" stroke="#b8b8b8" stroke-width="0.4"/><text transform="translate(604 344.8) scale(0.982 1)" font-family="Liberation Sans" font-size="7.2" fill="#555">132.0</text><rect x="707.2" y="316.3" width="15.9" height="6.1" fill="#cfcfcf" stroke="#b8b8b8" stroke-width="0.4"/><text transform="translate(708.2 320.5) scale(0.992 1)" font-family="Liberation Sans" font-size="7.2" fill="#555">27.6</text><rect x="701.1" y="321.4" width="30.9" height="9.2" fill="#cfcfcf" stroke="#b8b8b8" stroke-width="0.4"/><text transform="translate(702.1 328.70000000000005) scale(0.849 1)" font-family="Liberation Sans" font-size="7.2" fill="#555">27.6,150.0</text><path d="M824.5 425 L902.6 446.9" stroke="#b4cef2" stroke-width="0.7" stroke-dasharray="6 3 1.2 3" fill="none"/><defs><linearGradient id="arcg" x1="0" y1="0" x2="1" y2="1"><stop offset="0" stop-color="#bdbdbd"/><stop offset="1" stop-color="#4e4e4e"/></linearGradient></defs><path d="M839.4 412.6 Q857 413.6 857.2 432.8 L852.8 432.2 Q851.4 420.4 839 417.6 Z" fill="url(#arcg)"/><path d="M836.6 408.8 L841 406.6 L840.2 438 L842.6 436.5 L838.4 449 L834.6 441.6 L837 441.6 Z" fill="#3a3a3a"/><path d="M841.2 445.3 L846.8 443.2 L845.6 447.6 Z" fill="#c4c4c4"/><path d="M845 445 Q850 444 853 440" stroke="#cfcfcf" stroke-width="1" fill="none"/><rect x="838.2" y="391.2" width="18.8" height="8.6" fill="#cfcfcf" stroke="#b8b8b8" stroke-width="0.4"/><text transform="translate(839.2 397.90000000000003) scale(1.024 1)" font-family="Liberation Sans" font-size="7.2" fill="#555">-10.0</text><rect x="848.6" y="435.4" width="16.0" height="7.7" fill="#cfcfcf" stroke="#b8b8b8" stroke-width="0.4"/><text transform="translate(849.6 441.20000000000005) scale(0.999 1)" font-family="Liberation Sans" font-size="7.2" fill="#555">45.0</text><rect x="815.9" y="96" width="20.6" height="21.6" rx="1.8" fill="#e9e9e9"/><path d="M710.3 103.9 m0 0 M710.3 103.9 L713.0999999999999 106.7 M710.3 106.2 V103.9 H712.5999999999999" stroke="#3c3c3c" stroke-width="0.8" fill="none"/><path d="M718.7 103.9 m0 0 M718.7 103.9 L715.9000000000001 106.7 M718.7 106.2 V103.9 H716.4000000000001" stroke="#3c3c3c" stroke-width="0.8" fill="none"/><path d="M710.3 112.3 m0 0 M710.3 112.3 L713.0999999999999 109.5 M710.3 110.0 V112.3 H712.5999999999999" stroke="#3c3c3c" stroke-width="0.8" fill="none"/><path d="M718.7 112.3 m0 0 M718.7 112.3 L715.9000000000001 109.5 M718.7 110.0 V112.3 H716.4000000000001" stroke="#3c3c3c" stroke-width="0.8" fill="none"/><path d="M731 112.6 Q727.6 112.6 727.4 109.6 Q727.4 106.6 731.6 104.4 M729.4 104 L731.9 104.2 L731.4 106.6 M733.6 103.4 Q737 103.6 737 106.2 Q737 109 733.4 111.4 M735.6 111.6 L733.1 111.6 L733.4 109.2" stroke="#3c3c3c" stroke-width="0.8" fill="none"/><path d="M743 107.2 L744.7 109 L746.4 107.2" stroke="#3c3c3c" stroke-width="0.8" fill="none"/><rect x="749.9" y="99.8" width="0.7" height="16.6" fill="#dcdcdc"/><path d="M756.2 103.4 V110.4 H763 M754.3 105.2 H761.2 V112.4" stroke="#c4c4c4" stroke-width="0.9" fill="none"/><path d="M768.7 107.2 L770.4 109 L772.1 107.2" stroke="#3c3c3c" stroke-width="0.8" fill="none"/><path d="M780.6 105.6 H787.6 V112.4 H780.6 Z M780.6 105.6 L783.6 103 H790.6 L787.6 105.6 M790.6 103 V109.8 L787.6 112.4" stroke="#3c3c3c" stroke-width="0.75" fill="none"/><path d="M783.6 103 V109.8 H790.6 M783.6 109.8 L780.6 112.4" stroke="#3c3c3c" stroke-width="0.6" fill="none"/><path d="M800.7 105.6 L803.7 103 H810.7 V109.8 L807.7 112.4 H800.7 Z" fill="#cfcfcf"/><path d="M800.7 105.6 H807.7 V112.4 H800.7 Z M800.7 105.6 L803.7 103 H810.7 L807.7 105.6 M810.7 103 V109.8 L807.7 112.4" stroke="#3c3c3c" stroke-width="0.75" fill="none"/><path d="M802.2 107 H806.2 V111 H802.2 Z M806.2 107 L808.6 105 M803.8 105 V107" stroke="#555" stroke-width="0.5" fill="none"/><path d="M821.2 105.8 H828 V112.6 H821.2 Z" fill="#0c0c0c"/><path d="M821.4 105.2 L824.2 102.8 H831 L828.2 105.2 Z" fill="#0c0c0c"/><path d="M828.7 105.6 L831.1 103.4 V110.2 L828.7 112.5 Z" fill="#0c0c0c"/><path d="M841 106.3 L847 104.2 L851.4 105.6 V108.7 L845.3 111.6 L841 109.6 Z M841 106.3 L845.3 108 V111.6 M845.3 108 L851.4 105.6" stroke="#3c3c3c" stroke-width="0.8" fill="none"/><path d="M866.3 102.8 V113.2 M861 108 H871.6 M864 104.4 Q862.4 108 864 111.6 M868.6 104.4 Q870.2 108 868.6 111.6" stroke="#c4c4c4" stroke-width="0.8" fill="none"/><path d="M882 108 L886.8 103.4 L891.6 108 M883.6 107 V112.6 H890 V107 M885.8 112.6 V109.6 H887.8 V112.6" stroke="#3c3c3c" stroke-width="0.8" fill="none"/><ellipse cx="868.5" cy="164.9" rx="21.4" ry="10.2" fill="none" stroke="#dedede" stroke-width="4.4"/><path d="M847.6 154.6 L851.6 153.4 M849.6 153 L850.4 155.6 M887.4 167 L893 168.8 M851 176.6 L853.9 173.2 L857.6 172.2 M853.9 173.2 L853.2 170.6" stroke="#555" stroke-width="0.8" fill="none"/><polygon points="854.4,163.6 865.6,153.8 881.6,159.6 873.1,170.8" fill="rgba(100,100,100,0.6)"/><polygon points="852,144.4 864.7,136.9 883.8,141.2 874,149.3" fill="rgba(158,158,158,0.88)" stroke="#676767" stroke-width="0.5"/><polygon points="852,144.4 874,149.3 873.1,170.8 854.4,163.6" fill="rgba(150,150,150,0.86)" stroke="#676767" stroke-width="0.5"/><polygon points="874,149.3 883.8,141.2 881.6,159.6 873.1,170.8" fill="rgba(138,138,138,0.86)" stroke="#676767" stroke-width="0.5"/><path d="M864.7 136.9 L865.6 153.8 L854.4 163.6 M865.6 153.8 L881.6 159.6" stroke="#777" stroke-width="0.6" fill="none"/><path d="M867.6 143.4 L869.8 142.2 M863.2 158.2 V160.6 M864.6 158 V160.4 M861.6 158.8 L862.2 159.6 M878.2 154.4 L878.9 156.6" stroke="#f2f2f2" stroke-width="0.8"/></svg>
<span class="t" style="left:742.5px;top:127.3px;font-size:7.4px;line-height:9.6px;color:#f06b22;transform:scaleX(0.982);font-weight:bold;">Production cost</span>
<span class="t" style="left:801.5px;top:127.3px;font-size:7.4px;line-height:9.6px;color:#222;transform:scaleX(0.949);font-weight:bold;">-  20 €</span>
<svg class="r" style="left:804.6px;top:186.6px;" width="4.4" height="4.4" viewBox="0 0 4.40 4.40"><path d="M0.4 3.8 L3.8 0.4 V3.8 Z" fill="#333"/></svg>
<span class="t" style="left:816.4px;top:183.1px;font-size:7.6px;line-height:9.9px;color:#000;transform:scaleX(0.942);">CON1</span>
<svg class="r" style="left:817.4px;top:200.0px;" width="4.4" height="4.4" viewBox="0 0 4.40 4.40"><path d="M0.4 3.8 L3.8 0.4 V3.8 Z" fill="#333"/></svg>
<span class="t" style="left:828.8px;top:196.2px;font-size:7.4px;line-height:9.6px;color:#222;transform:scaleX(1.022);font-weight:bold;">Members</span>
<div class="r" style="left:829.2px;top:213.6px;width:6.6px;height:6.4px;background:#ececec;"></div><svg class="r" style="left:829.8px;top:212.2px;" width="8.2" height="7.6" viewBox="0 0 8.20 7.60"><path d="M0.9 4 L3 6.4 L7.4 0.8" stroke="#f58a1f" stroke-width="1.05" fill="none"/></svg>
<span class="t" style="left:842.8px;top:212.0px;font-size:7.4px;line-height:9.6px;color:#686868;transform:scaleX(0.906);">B1</span>
<div class="r" style="left:829.2px;top:227.8px;width:6.6px;height:6.4px;background:#ececec;"></div><svg class="r" style="left:829.8px;top:226.4px;" width="8.2" height="7.6" viewBox="0 0 8.20 7.60"><path d="M0.9 4 L3 6.4 L7.4 0.8" stroke="#f58a1f" stroke-width="1.05" fill="none"/></svg>
<span class="t" style="left:842.8px;top:226.3px;font-size:7.4px;line-height:9.6px;color:#686868;transform:scaleX(0.906);text-decoration:underline;">B2</span>
<svg class="r" style="left:817.4px;top:242.2px;" width="4.4" height="4.4" viewBox="0 0 4.40 4.40"><path d="M0.4 3.8 L3.8 0.4 V3.8 Z" fill="#333"/></svg>
<span class="t" style="left:828.8px;top:238.6px;font-size:7.4px;line-height:9.6px;color:#222;transform:scaleX(0.998);font-weight:bold;">Load effects</span>
<div class="r" style="left:829.2px;top:254.7px;width:6.6px;height:6.4px;background:#ececec;"></div><svg class="r" style="left:829.8px;top:253.3px;" width="8.2" height="7.6" viewBox="0 0 8.20 7.60"><path d="M0.9 4 L3 6.4 L7.4 0.8" stroke="#f58a1f" stroke-width="1.05" fill="none"/></svg>
<span class="t" style="left:842.8px;top:253.1px;font-size:7.4px;line-height:9.6px;color:#686868;transform:scaleX(0.820);">LE1</span>
<svg class="r" style="left:817.4px;top:270.0px;" width="4.4" height="4.4" viewBox="0 0 4.40 4.40"><path d="M0.4 3.8 L3.8 0.4 V3.8 Z" fill="#333"/></svg>
<div class="r" style="left:825.7px;top:264.6px;width:68.3px;height:12.2px;background:#f06b22;"></div>
<span class="t" style="left:829.0px;top:266.1px;font-size:7.4px;line-height:9.6px;color:#fff;transform:scaleX(1.000);font-weight:bold;">Operations [P]</span>
<div class="r" style="left:829.2px;top:282.8px;width:6.6px;height:6.4px;background:#ececec;"></div><svg class="r" style="left:829.8px;top:281.4px;" width="8.2" height="7.6" viewBox="0 0 8.20 7.60"><path d="M0.9 4 L3 6.4 L7.4 0.8" stroke="#9a9a9a" stroke-width="1.05" fill="none"/></svg>
<span class="t" style="left:842.8px;top:281.3px;font-size:7.4px;line-height:9.6px;color:#686868;transform:scaleX(0.884);">SPL1</span>
<div class="r" style="left:829.2px;top:296.1px;width:6.6px;height:6.4px;background:#ececec;"></div><svg class="r" style="left:829.8px;top:294.7px;" width="8.2" height="7.6" viewBox="0 0 8.20 7.60"><path d="M0.9 4 L3 6.4 L7.4 0.8" stroke="#9a9a9a" stroke-width="1.05" fill="none"/></svg>
<span class="t" style="left:842.8px;top:294.6px;font-size:7.4px;line-height:9.6px;color:#686868;transform:scaleX(0.884);">SPL2</span>
<!-- part_right -->
<div class="r" style="left:903.3px;top:97.6px;width:3.6px;height:532.4px;background:#cacaca;"></div>
<div class="r" style="left:906.9px;top:97.6px;width:293.1px;height:532.4px;background:#fff;"></div>
<div class="r" style="left:906.9px;top:97.9px;width:293.1px;height:15.3px;background:#f06b22;"></div>
<span class="t" style="left:913.0px;top:101.5px;font-size:8.2px;line-height:10.7px;color:#fff;transform:scaleX(0.894);font-weight:bold;">Operations</span>
<span class="t" style="left:1113.3px;top:101.5px;font-size:8.2px;line-height:10.7px;color:#fbc9a8;transform:scaleX(0.856);font-weight:bold;">Weld sizing</span>
<span class="t" style="left:1165.0px;top:101.5px;font-size:8.2px;line-height:10.7px;color:#fff;transform:scaleX(0.872);font-weight:bold;">Explode</span>
<svg class="r" style="left:917.7px;top:124.8px;" width="6.0" height="5.0" viewBox="0 0 6.00 5.00"><path d="M0.8 1.2 L3 3.5 L5.2 1.2" stroke="#f06b22" stroke-width="0.8" fill="none"/></svg>
<span class="t" style="left:928.3px;top:123.0px;font-size:7.4px;line-height:9.6px;color:#222;transform:scaleX(0.995);font-weight:bold;">Parameters</span>
<span class="t" style="left:928.3px;top:138.8px;font-size:7.5px;line-height:9.8px;color:#555;transform:scaleX(0.987);">Splice Thickness [mm]</span>
<div class="r" style="left:1024.9px;top:136.1px;width:172.9px;height:12.5px;background:#fff;border:0.9px solid #e4e4e4;box-sizing:border-box;"></div>
<span class="t" style="left:1028.3px;top:138.8px;font-size:7.5px;line-height:9.8px;color:#222;transform:scaleX(0.863);">6.0</span>
<span class="t" style="left:928.3px;top:153.9px;font-size:7.5px;line-height:9.8px;color:#555;transform:scaleX(1.016);">Bolts Diameter [mm]</span>
<div class="r" style="left:1024.9px;top:151.2px;width:172.9px;height:12.5px;background:#fff;border:0.9px solid #e4e4e4;box-sizing:border-box;"></div>
<span class="t" style="left:1028.3px;top:153.9px;font-size:7.5px;line-height:9.8px;color:#222;transform:scaleX(0.870);">12.0</span>
<span class="t" style="left:928.3px;top:169.0px;font-size:7.5px;line-height:9.8px;color:#555;transform:scaleX(0.998);">Spacing tranverse [mm]</span>
<div class="r" style="left:1024.9px;top:166.3px;width:172.9px;height:12.5px;background:#fff;border:0.9px solid #e4e4e4;box-sizing:border-box;"></div>
<span class="t" style="left:1028.3px;top:169.0px;font-size:7.5px;line-height:9.8px;color:#222;transform:scaleX(0.870);">27.6</span>
<span class="t" style="left:928.3px;top:184.0px;font-size:7.5px;line-height:9.8px;color:#555;transform:scaleX(1.009);">Number of rows</span>
<div class="r" style="left:1024.9px;top:181.3px;width:172.9px;height:12.5px;background:#fff;border:0.9px solid #e4e4e4;box-sizing:border-box;"></div>
<span class="t" style="left:1028.3px;top:184.0px;font-size:7.5px;line-height:9.8px;color:#222;transform:scaleX(0.719);">3</span>
<span class="t" style="left:928.3px;top:199.1px;font-size:7.5px;line-height:9.8px;color:#555;transform:scaleX(1.039);">Spacing longitudinal [mm]</span>
<div class="r" style="left:1024.9px;top:196.4px;width:172.9px;height:12.5px;background:#fff;border:0.9px solid #e4e4e4;box-sizing:border-box;"></div>
<span class="t" style="left:1028.3px;top:199.1px;font-size:7.5px;line-height:9.8px;color:#222;transform:scaleX(0.870);">36.0</span>
<span class="t" style="left:928.3px;top:214.2px;font-size:7.5px;line-height:9.8px;color:#555;transform:scaleX(1.002);">First row distance [mm]</span>
<div class="r" style="left:1024.9px;top:211.5px;width:172.9px;height:12.5px;background:#fff;border:0.9px solid #e4e4e4;box-sizing:border-box;"></div>
<span class="t" style="left:1028.3px;top:214.2px;font-size:7.5px;line-height:9.8px;color:#222;transform:scaleX(0.870);">24.0</span>
<span class="t" style="left:928.3px;top:229.3px;font-size:7.5px;line-height:9.8px;color:#555;transform:scaleX(1.002);">Last row distance [mm]</span>
<div class="r" style="left:1024.9px;top:226.6px;width:172.9px;height:12.5px;background:#fff;border:0.9px solid #e4e4e4;box-sizing:border-box;"></div>
<span class="t" style="left:1028.3px;top:229.3px;font-size:7.5px;line-height:9.8px;color:#222;transform:scaleX(0.870);">24.0</span>
<span class="t" style="left:928.3px;top:244.5px;font-size:7.5px;line-height:9.8px;color:#555;transform:scaleX(0.988);">Backing plate</span>
<div class="r" style="left:1025.0px;top:245.0px;width:7.4px;height:7.4px;background:#fff;border:0.9px solid #e4e4e4;box-sizing:border-box;"></div>
<svg class="r" style="left:917.7px;top:268.1px;" width="6.0" height="5.0" viewBox="0 0 6.00 5.00"><path d="M0.8 1.2 L3 3.5 L5.2 1.2" stroke="#f06b22" stroke-width="0.8" fill="none"/></svg>
<span class="t" style="left:928.3px;top:266.3px;font-size:7.4px;line-height:9.6px;color:#222;transform:scaleX(0.993);font-weight:bold;">Welds</span>
<span class="t" style="left:928.3px;top:281.8px;font-size:7.5px;line-height:9.8px;color:#555;transform:scaleX(1.006);">Weld sizing method</span>
<div class="r" style="left:1001.0px;top:279.4px;width:196.8px;height:12.8px;background:#fff;border:0.9px solid #e4e4e4;box-sizing:border-box;"></div>
<span class="t" style="left:1005.6px;top:281.8px;font-size:7.5px;line-height:9.8px;color:#333;transform:scaleX(0.999);">To capacity estimation</span>
<svg class="r" style="left:1188.5px;top:283.9px;" width="6.0" height="5.0" viewBox="0 0 6.00 5.00"><path d="M0.8 1.2 L3 3.5 L5.2 1.2" stroke="#444" stroke-width="0.8" fill="none"/></svg>
<!-- part_dialog -->
<div class="r" style="left:273.6px;top:130.6px;width:220.0px;height:377.0px;background:#fff;border:0.8px solid #c9c9c9;box-sizing:border-box;box-shadow:0 0 2px rgba(0,0,0,0.25);"></div>
<div class="r" style="left:274.0px;top:130.7px;width:219.3px;height:19.1px;background:#f06b22;"></div>
<div class="r" style="left:464.8px;top:130.7px;width:28.5px;height:19.1px;background:#e81123;"></div>
<svg class="r" style="left:474.5px;top:135.5px;" width="10.0" height="10.0" viewBox="0 0 10.00 10.00"><path d="M2.2 2.2 L7.6 7.6 M7.6 2.2 L2.2 7.6" stroke="#fff" stroke-width="0.9"/></svg>
<span class="t" style="left:279.0px;top:134.2px;font-size:10px;line-height:13.0px;color:#fff;transform:scaleX(0.940);">Publish connection design</span>
<div class="r" style="left:486.0px;top:152.0px;width:26.8px;height:14.6px;background:#fff;border:0.8px solid #d5d5d5;box-sizing:border-box;"></div>
<span class="t" style="left:490.6px;top:155.1px;font-size:7.5px;line-height:9.8px;color:#555;transform:scaleX(0.928);">Close</span>
<div class="r" style="left:303.6px;top:172.0px;width:155.4px;height:156.4px;border:0.6px solid #fbfbfb;box-sizing:border-box;"></div>
<svg class="r" style="left:290px;top:190px" width="180" height="120" viewBox="290 190 180 120"><defs><linearGradient id="tw" x1="0" y1="0" x2="0.25" y2="1"><stop offset="0" stop-color="#6583aa"/><stop offset="0.25" stop-color="#6d8bb0"/><stop offset="1" stop-color="#6a88ae"/></linearGradient></defs><polygon points="353.4,262.0 388.1,272.5 388.1,274.4 353.4,263.9" fill="#1d2a5c"/><polygon points="451.5,277.2 452.3,277.4 452.3,281.0 451.5,281.4" fill="#7797c1"/><polygon points="313.2,212.5 451.5,247.1 451.5,279.9 313.2,244.7" fill="url(#tw)"/><polygon points="314.4,243.9 451.5,279.5 452.3,278.0 452.3,281.0 443.9,291.9 309.6,248.1 309.6,246.8" fill="#7797c1"/><polygon points="309.6,246.8 443.9,290.4 443.9,291.9 309.6,248.3" fill="#84a7d6"/><polygon points="318.6,203.0 457.6,236.3 449.0,247.1 304.9,210.0" fill="#7b9cc5"/><polygon points="304.9,210.0 449.0,247.1 449.0,248.7 304.9,211.5" fill="#88abda"/><polygon points="449.0,247.1 457.6,236.3 457.6,237.6 449.0,248.7" fill="#8aa9d2"/><path d="M374.8 229.0 V261.4" stroke="#90b0de" stroke-width="0.7"/><polygon points="363.3,212.9 399.5,221.4 387.1,230.6 351.3,221.0" fill="#2b3b74"/><ellipse cx="364.9" cy="215.3" rx="2" ry="1.7" fill="#e9b814"/><ellipse cx="369.4" cy="216.7" rx="2" ry="1.7" fill="#e9b814"/><ellipse cx="374.0" cy="218.2" rx="2" ry="1.7" fill="#e9b814"/><ellipse cx="380.9" cy="219.5" rx="2" ry="1.7" fill="#e9b814"/><ellipse cx="385.6" cy="220.9" rx="2" ry="1.7" fill="#e9b814"/><ellipse cx="390.4" cy="222.4" rx="2" ry="1.7" fill="#e9b814"/><ellipse cx="359.9" cy="219.0" rx="2" ry="1.7" fill="#e9b814"/><ellipse cx="364.7" cy="220.1" rx="2" ry="1.7" fill="#e9b814"/><ellipse cx="369.4" cy="221.4" rx="2" ry="1.7" fill="#e9b814"/><ellipse cx="376.1" cy="223.0" rx="2" ry="1.7" fill="#e9b814"/><ellipse cx="381.0" cy="224.3" rx="2" ry="1.7" fill="#e9b814"/><ellipse cx="385.8" cy="225.6" rx="2" ry="1.7" fill="#e9b814"/><ellipse cx="360.5" cy="259.0" rx="1.8" ry="2" fill="#e6b416"/><ellipse cx="365.2" cy="260.5" rx="1.8" ry="2" fill="#e6b416"/><ellipse cx="369.6" cy="261.8" rx="1.8" ry="2" fill="#e6b416"/><ellipse cx="376.1" cy="263.7" rx="1.8" ry="2" fill="#e6b416"/><ellipse cx="380.9" cy="265.2" rx="1.8" ry="2" fill="#e6b416"/><ellipse cx="385.6" cy="266.8" rx="1.8" ry="2" fill="#e6b416"/></svg>
<svg class="r" style="left:282.4px;top:333.0px;" width="6.0" height="5.0" viewBox="0 0 6.00 5.00"><path d="M0.8 1.2 L3 3.5 L5.2 1.2" stroke="#f06b22" stroke-width="0.8" fill="none"/></svg>
<span class="t" style="left:293.3px;top:331.7px;font-size:7.4px;line-height:9.6px;color:#222;transform:scaleX(0.997);font-weight:bold;">Properties</span>
<span class="t" style="left:293.3px;top:346.8px;font-size:7.5px;line-height:9.8px;color:#555;transform:scaleX(0.985);">Name</span>
<div class="r" style="left:345.0px;top:344.3px;width:138.8px;height:12.5px;background:#fff;border:0.8px solid #e2e2e2;box-sizing:border-box;"></div>
<span class="t" style="left:348.6px;top:346.8px;font-size:7.5px;line-height:9.8px;color:#333;transform:scaleX(0.968);">Symmetrical Splice</span>
<span class="t" style="left:293.3px;top:361.8px;font-size:7.5px;line-height:9.8px;color:#555;transform:scaleX(0.987);">Loading Type</span>
<div class="r" style="left:345.0px;top:360.6px;width:10.0px;height:11.4px;background:#fff;border:0.8px solid #bcbcbc;box-sizing:border-box;"></div>
<span class="t" style="left:347.2px;top:361.9px;font-size:7.5px;line-height:9.8px;color:#333;transform:scaleX(0.960);">M</span>
<div class="r" style="left:357.0px;top:360.6px;width:10.3px;height:11.4px;background:#fff;border:0.8px solid #bcbcbc;box-sizing:border-box;"></div>
<span class="t" style="left:360.0px;top:361.9px;font-size:7.5px;line-height:9.8px;color:#333;transform:scaleX(0.800);">S</span>
<div class="r" style="left:369.0px;top:360.6px;width:11.0px;height:11.4px;background:#fff;border:0.8px solid #bcbcbc;box-sizing:border-box;"></div>
<span class="t" style="left:372.3px;top:361.9px;font-size:7.5px;line-height:9.8px;color:#333;transform:scaleX(0.917);">T</span>
<span class="t" style="left:293.3px;top:376.6px;font-size:7.5px;line-height:9.8px;color:#555;transform:scaleX(0.983);">Connectors</span>
<div class="r" style="left:345.0px;top:374.4px;width:138.8px;height:12.5px;background:#ededed;border:0.8px solid #dcdcdc;box-sizing:border-box;"></div>
<span class="t" style="left:348.8px;top:376.6px;font-size:7.5px;line-height:9.8px;color:#a6a6a6;transform:scaleX(0.990);">Bolt</span>
<span class="t" style="left:293.3px;top:391.6px;font-size:7.5px;line-height:9.8px;color:#555;transform:scaleX(0.897);">CDS</span>
<div class="r" style="left:345.0px;top:389.3px;width:138.8px;height:12.4px;background:#fff;border:0.8px solid #e2e2e2;box-sizing:border-box;"></div>
<span class="t" style="left:348.8px;top:391.6px;font-size:7.5px;line-height:9.8px;color:#333;transform:scaleX(1.003);">Company connection design set</span>
<svg class="r" style="left:474.2px;top:393.7px;" width="6.0" height="5.0" viewBox="0 0 6.00 5.00"><path d="M0.8 1.2 L3 3.5 L5.2 1.2" stroke="#444" stroke-width="0.8" fill="none"/></svg>
<span class="t" style="left:293.3px;top:406.8px;font-size:7.5px;line-height:9.8px;color:#555;transform:scaleX(0.968);">Parametric</span>
<div class="r" style="left:345.0px;top:407.6px;width:7.8px;height:7.4px;background:#fff;border:0.8px solid #dcdcdc;box-sizing:border-box;"></div>
<svg class="r" style="left:345.0px;top:407.6px;" width="7.8" height="7.4" viewBox="0 0 7.80 7.40"><path d="M1.9 4 L3.3 5.3 L5.9 2.4" stroke="#f06b22" stroke-width="0.9" fill="none"/></svg>
<div class="r" style="left:274.8px;top:476.8px;width:218.1px;height:30.2px;background:#e5e5e5;"></div>
<div class="r" style="left:357.5px;top:483.0px;width:61.3px;height:17.6px;background:#f08245;"></div>
<span class="t" style="left:373.6px;top:486.5px;font-size:8.8px;line-height:11.4px;color:#fff;transform:scaleX(1.001);">Publish</span>
<div class="r" style="left:425.0px;top:483.0px;width:61.4px;height:17.6px;background:#a8a8a8;"></div>
<span class="t" style="left:445.2px;top:486.5px;font-size:8.8px;line-height:11.4px;color:#fff;transform:scaleX(0.942);">Close</span>
</div></body></html>
